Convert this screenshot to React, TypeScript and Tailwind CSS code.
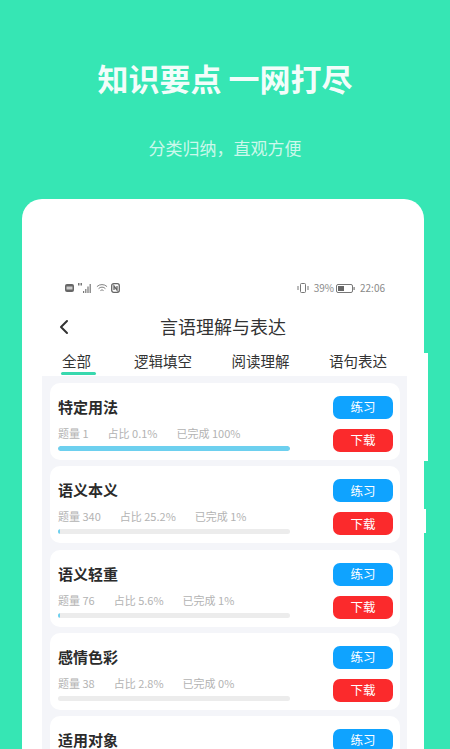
import { ChevronLeft } from "lucide-react";

const font = "font-['Noto_Sans_CJK_SC','Noto_Sans',sans-serif]";

type Topic = { name: string; count?: number; share?: string; done?: number };

// last one is cut by the bottom of the screenshot, only its title shows
const topics: Topic[] = [
  { name: "特定用法", count: 1, share: "0.1%", done: 100 },
  { name: "语义本义", count: 340, share: "25.2%", done: 1 },
  { name: "语义轻重", count: 76, share: "5.6%", done: 1 },
  { name: "感情色彩", count: 38, share: "2.8%", done: 0 },
  { name: "适用对象" },
];

function StatusBar() {
  return (
    <div className="flex h-[18px] items-center justify-between pl-[43px] pr-[39px] text-[10px] leading-none text-[#8a8a8a]">
      <div className="flex items-center gap-[3px]">
        <svg width="9" height="8" viewBox="0 0 9 8"><rect width="9" height="8" rx="2" fill="#666" /><rect x="1.5" y="2.5" width="6" height="3" fill="#ccc" /></svg>
        <svg width="16" height="10" viewBox="0 0 16 10" fill="#777">
          <rect x="1" y="0" width="1.5" height="2.5" />
          <rect x="3.5" y="0" width="1.5" height="2.5" />
          <rect x="6" y="8" width="1.2" height="2" />
          <rect x="8.2" y="6" width="1.2" height="4" />
          <rect x="10.4" y="3.5" width="1.2" height="6.5" />
          <rect x="12.6" y="1" width="1.2" height="9" />
        </svg>
        <svg width="12" height="10" viewBox="0 0 13 10" fill="none" stroke="#777" strokeWidth="1">
          <path d="M1 3.5a8 8 0 0 1 11 0M2.8 5.7a5 5 0 0 1 7.4 0M4.8 7.8a2.4 2.4 0 0 1 3.4 0" />
        </svg>
        <svg width="9" height="10" viewBox="0 0 9 10" fill="none" stroke="#666" strokeWidth="1.3">
          <rect x="0.7" y="0.7" width="7.6" height="8.6" rx="2" />
          <path d="M3 7V3l3 4V3" />
        </svg>
      </div>
      <div className="flex items-center gap-[2px]">
        <svg width="12" height="10" viewBox="0 0 12 10" fill="none" stroke="#777">
          <rect x="3.5" y="0.5" width="5" height="9" rx="1" />
          <path d="M1 3v4M11 3v4" />
        </svg>
        <span className="ml-[3px]">39%</span>
        <svg width="19" height="9" viewBox="0 0 19 9" fill="none">
          <rect x="0.5" y="0.5" width="16" height="8" rx="1.5" stroke="#777" />
          <rect x="2" y="2" width="6" height="5" fill="#666" />
          <rect x="17.5" y="3" width="1.2" height="3" fill="#777" />
        </svg>
        <span className="ml-[3px]">22:06</span>
      </div>
    </div>
  );
}

function TopicCard({ name, count, share, done }: Topic) {
  return (
    <div className="flex h-[77px] shrink-0 justify-between rounded-[10px] bg-white pl-2 pr-[7px] pt-[13px]">
      <div className="w-[232px]">
        <div className="text-[15px] font-bold leading-[22px] text-[#2b2b2b]">{name}</div>
        {done !== undefined && (
          <>
            <div className="mt-[8px] flex gap-[19px] text-[11px] leading-[14px] text-[#b3b3b3]">
              <span>题量 {count}</span>
              <span>占比 {share}</span>
              <span>已完成 {done}%</span>
            </div>
            <div className="mt-[6px] h-[5px] overflow-hidden rounded-full bg-[#ececec]">
              <div className="h-full rounded-full bg-[#6dd0ef]" style={{ width: `${done}%` }} />
            </div>
          </>
        )}
      </div>
      <div className="flex w-[60px] flex-col gap-[10px]">
        <button className="h-[23px] rounded-[7px] bg-[#0fa3ff] text-[12.5px] leading-none text-white">练习</button>
        {done !== undefined && (
          <button className="h-[23px] rounded-[7px] bg-[#fb2a2c] text-[12.5px] leading-none text-white">下载</button>
        )}
      </div>
    </div>
  );
}

export default function App() {
  return (
    <div className={`flex h-[749px] w-[450px] flex-col overflow-hidden bg-[#36e6b4] ${font}`}>
      <h1 className="mt-[56px] text-center text-[31px] font-bold leading-[44px] text-white/95">知识要点 一网打尽</h1>
      <p className="mt-[35px] text-center text-[17px] leading-[26px] text-white/75">分类归纳，直观方便</p>
      <div className="relative ml-[22px] mt-[38px] flex w-[402px] flex-1 flex-col rounded-t-[20px] bg-white pt-[80px]">
        <div className="absolute left-[402px] top-[154px] h-[108px] w-[4px] bg-white" />
        <div className="absolute left-[402px] top-[310px] h-[24px] w-[2px] bg-white" />
        <StatusBar />
        <div className="relative mt-[11px] flex h-[37px] items-center justify-center text-[18px] text-[#333]">
          <ChevronLeft className="absolute left-[30px] h-6 w-6 text-[#333]" strokeWidth={2} />
          言语理解与表达
        </div>
        <div className="flex h-[31px] gap-[39.5px] pl-[40px] text-[14.5px] leading-[20px] text-[#333]">
          <span className="relative mr-[3.5px] h-[30px] pt-[6px]">
            全部
            <span className="absolute -left-[1px] bottom-0 h-[3px] w-[35px] rounded-full bg-[#38d8ae]" />
          </span>
          <span className="pt-[6px]">逻辑填空</span>
          <span className="pt-[6px]">阅读理解</span>
          <span className="pt-[6px]">语句表达</span>
        </div>
        <div className="ml-[20px] mr-[17px] flex flex-1 flex-col gap-[6.25px] overflow-hidden bg-[#f4f5f9] pl-2 pr-[7px] pt-[7px]">
          {topics.map((t) => (
            <TopicCard key={t.name} {...t} />
          ))}
        </div>
      </div>
    </div>
  );
}
